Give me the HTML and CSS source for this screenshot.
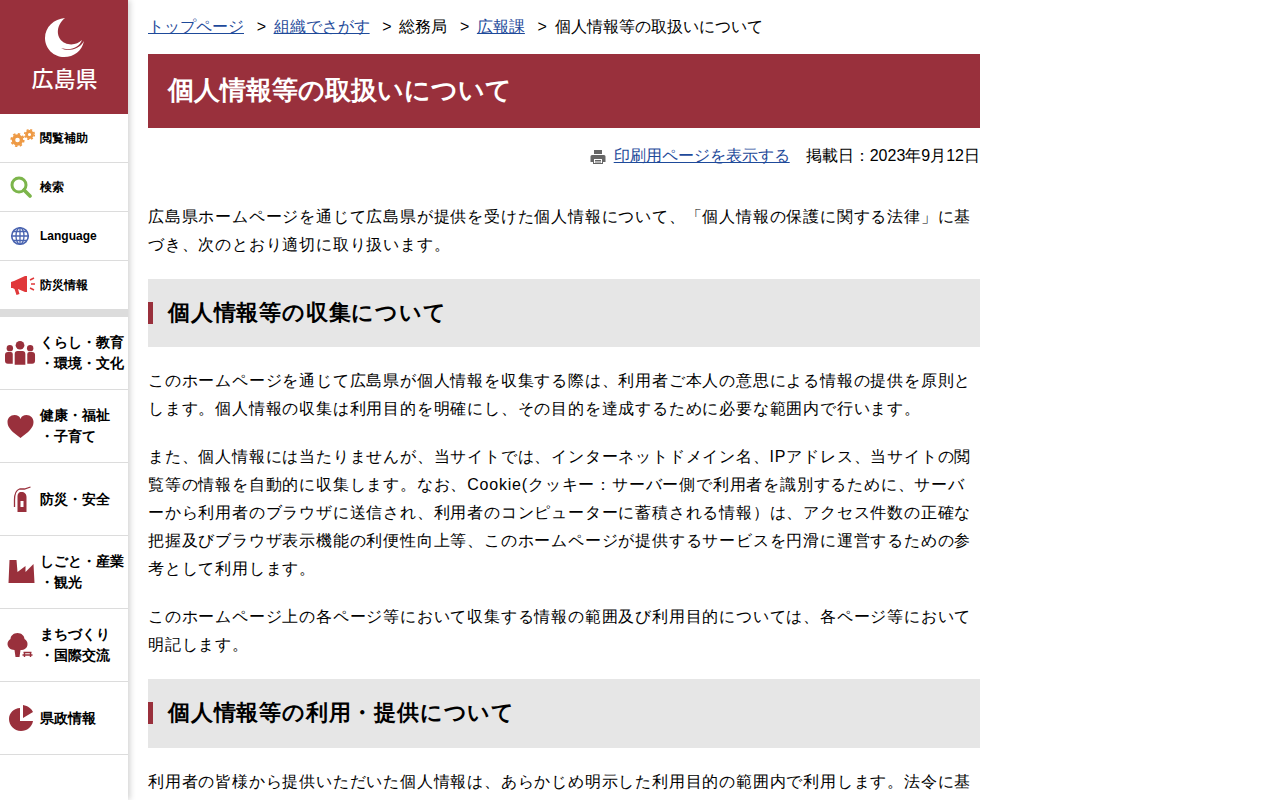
FILE: index.html
```html
<!DOCTYPE html>
<html lang="ja">
<head>
<meta charset="utf-8">
<title>個人情報等の取扱いについて</title>
<link rel="stylesheet" href="styles.css">
</head>
<body>
<div class="page">
<aside class="side">
  <a class="logo">
    <svg class="logo-mark" width="42" height="42" viewBox="0 0 42 42"><path fill="#fff" d="M21 1C10 2 1 10 1 21c0 11 9 19 19 19 10 0 18-6 20-16-3 6-10 9-16 9-3 0-5-1-7-2 9 3 18 0 21-8-4 4-11 6-17 3C12 22 11 9 21 1z"/></svg>
    <span class="logo-text">広島県</span>
  </a>
  <ul class="tools">
    <li class="tool"><svg class="ico" width="26" height="20" viewBox="0 0 26 20"><g fill="none" stroke="#ee9a45"><circle cx="7.500" cy="12" r="4" stroke-width="3.400"/><circle cx="7.500" cy="12" r="6.200" stroke-width="1.800" stroke-dasharray="2.400 2.400"/><circle cx="19.500" cy="6.500" r="3" stroke-width="2.800"/><circle cx="19.500" cy="6.500" r="4.800" stroke-width="1.600" stroke-dasharray="2 1.800"/></g></svg><span>閲覧補助</span></li>
    <li class="tool"><svg class="ico" width="26" height="22" viewBox="0 0 26 22"><circle cx="9" cy="9" r="7" fill="none" stroke="#7cb54b" stroke-width="3"/><path d="M14 14l6 6" stroke="#7cb54b" stroke-width="3.600" stroke-linecap="round"/></svg><span>検索</span></li>
    <li class="tool"><svg class="ico" width="26" height="20" viewBox="0 0 26 20"><g fill="none" stroke="#4a64b0" stroke-width="1.300"><circle cx="10" cy="10" r="8.300" stroke-width="1.600"/><ellipse cx="10" cy="10" rx="4" ry="8.300"/><path d="M10 1.700v16.600M1.700 10h16.600M3 5.500h14M3 14.500h14"/></g></svg><span class="latin">Language</span></li>
    <li class="tool"><svg class="ico" width="26" height="22" viewBox="0 0 26 22"><path fill="#e0383a" d="M1 8l3-1 11-5h2v16h-2L8 15l1.500 5-3 1-2-6-2-1H1z"/><path stroke="#e0383a" stroke-width="1.500" d="M20 6l4-2M21 10h4M20 14l4 2"/></svg><span>防災情報</span></li>
  </ul>
  <ul class="cats">
    <li class="cat cat-a"><svg class="cico" width="32" height="26" viewBox="0 0 32 26"><g fill="#99303c"><circle cx="15.500" cy="5" r="4.500"/><circle cx="5" cy="8" r="3.300"/><circle cx="26" cy="8" r="3.300"/><path d="M10 14q0-3 3-3h5q3 0 3 3v11H10zM0 15q0-3 3-3h3q2 0 2 2v10H3q-3 0-3-3zM23 14q0-2 2-2h3q3 0 3 3v6q0 3-3 3h-5z"/></g></svg><span>くらし・教育<br><i class="sub">・環境・文化</i></span></li>
    <li class="cat"><svg class="cico heart" width="28" height="24" viewBox="0 0 28 24"><path fill="#99303c" d="M14 24C6 18 1 14 1 8c0-4 3-7 7-7 3 0 5 1 6 4 1-3 3-4 6-4 4 0 7 3 7 7 0 6-5 10-13 16z"/></svg><span>健康・福祉<br><i class="sub">・子育て</i></span></li>
    <li class="cat"><svg class="cico" width="28" height="26" viewBox="0 0 28 26"><path fill="#99303c" d="M15 6c3 0 5 2 5 5v15h-9V11c0-3 1-5 4-5zM14 15v6h3v-6z"/><path fill="none" stroke="#99303c" stroke-width="1.300" d="M13 3h5l6-2M13 3C10 4 8 8 8 14v7"/></svg><span>防災・安全</span></li>
    <li class="cat"><svg class="cico" width="28" height="24" viewBox="0 0 28 24"><path fill="#99303c" d="M3 0h7l1 12 8-6v6l8-8 1 19H2z"/></svg><span>しごと・産業<br><i class="sub">・観光</i></span></li>
    <li class="cat"><svg class="cico" width="28" height="26" viewBox="0 0 28 26"><path fill="#99303c" d="M11 1c4 0 7 3 7 6 2 1 3 3 3 5 0 4-3 6-7 6l-1 7h-4l-1-7c-4 0-7-3-7-6 0-2 1-4 3-5 0-3 3-6 7-6z"/><path fill="none" stroke="#99303c" stroke-width="1.400" d="M17 20.500h8M16 23h10M18 21v4M24 21v4"/></svg><span>まちづくり<br><i class="sub">・国際交流</i></span></li>
    <li class="cat"><svg class="cico" width="28" height="26" viewBox="-1.500 0 28 26"><path fill="#99303c" d="M12 3v13h13c-1 6-6 10-12 10C6 26 1 20 1 14 1 8 6 3 12 3zM15 0c5 1 9 4 10 7l-10 6z"/></svg><span>県政情報</span></li>
  </ul>
</aside>
<main class="main">
  <nav class="crumbs"><a class="link">トップページ</a><span class="sep">&gt;</span><a class="link">組織でさがす</a><span class="sep">&gt;</span><span>総務局</span><span class="sep">&gt;</span><a class="link">広報課</a><span class="sep">&gt;</span><span>個人情報等の取扱いについて</span></nav>
  <h1 class="title">個人情報等の取扱いについて</h1>
  <div class="meta">
    <svg class="print" width="16" height="16" viewBox="0 0 16 16"><path fill="#666" fill-rule="evenodd" d="M4 1h8v4H4zM2 6h12q1.500 0 1.500 1.500V13H13v2H3v-2H.5V7.500Q.5 6 2 6zM4 10v4h8v-4z"/><path stroke="#666" d="M5 11.500h6M5 13h6"/></svg>
    <a class="link print-link">印刷用ページを表示する</a>
    <span class="date">掲載日：2023年9月12日</span>
  </div>
  <p class="para intro">広島県ホームページを通じて広島県が提供を受けた個人情報について、「個人情報の保護に関する法律」に基づき、次のとおり適切に取り扱います。</p>
  <h2 class="section"><span class="section-text">個人情報等の収集について</span></h2>
  <p class="para">このホームページを通じて広島県が個人情報を収集する際は、利用者ご本人の意思による情報の提供を原則とします。個人情報の収集は利用目的を明確にし、その目的を達成するために必要な範囲内で行います。</p>
  <p class="para">また、個人情報には当たりませんが、当サイトでは、インターネットドメイン名、IPアドレス、当サイトの閲覧等の情報を自動的に収集します。なお、Cookie(クッキー：サーバー側で利用者を識別するために、サーバーから利用者のブラウザに送信され、利用者のコンピューターに蓄積される情報）は、アクセス件数の正確な把握及びブラウザ表示機能の利便性向上等、このホームページが提供するサービスを円滑に運営するための参考として利用します。</p>
  <p class="para">このホームページ上の各ページ等において収集する情報の範囲及び利用目的については、各ページ等において明記します。</p>
  <h2 class="section section-b"><span class="section-text">個人情報等の利用・提供について</span></h2>
  <p class="para">利用者の皆様から提供いただいた個人情報は、あらかじめ明示した利用目的の範囲内で利用します。法令に基</p>
</main>
</div>
</body>
</html>
```

FILE: styles.css
```css
* { box-sizing: border-box; }
html, body { margin: 0; padding: 0; height: 800px; overflow: hidden; background: #fff; }
body { font-family: "Liberation Sans", sans-serif; color: #000; font-size: 16px; }
.page { display: flex; height: 800px; overflow: hidden; }
.side { width: 128px; flex: none; height: 800px; background: #fff; box-shadow: 2px 0 6px rgba(0,0,0,.18); }
.logo { height: 114px; background: #99303c; display: flex; flex-direction: column; align-items: center; padding-top: 17px; padding-left: 1px; color: #fff; }
.logo-mark { display: block; }
.logo-text { font-family: "Noto Sans CJK JP", sans-serif; font-size: 22px; line-height: 24px; margin-top: 6px; font-weight: 500; }
ul { list-style: none; margin: 0; padding: 0; }
.tools { border-bottom: 8px solid #dcdcdc; }
.tool { height: 49px; display: flex; align-items: center; padding-left: 10px; border-bottom: 1px solid #dcdcdc; font-size: 12px; font-weight: 700; gap: 4px; }
.tool:last-child { border-bottom: none; height: 48px; }
.ico { flex: none; }
.cat { height: 73px; display: flex; align-items: center; padding-left: 5px; border-bottom: 1px solid #dcdcdc; font-size: 14px; font-weight: 700; line-height: 21px; gap: 4px; }
.cico { flex: none; width: 31px; }
.sub { font-style: normal; }
.main { width: 832px; margin-left: 20px; }
.crumbs { height: 54px; display: flex; align-items: center; white-space: nowrap; }
.sep { margin: 0 7.6px 0 12.7px; }
.link { color: #1e4a9a; text-decoration: underline; }
.title { margin: 0; height: 74px; background: #99303c; color: #fff; font-size: 26.08px; font-weight: 700; line-height: 73px; padding-left: 20px; }
.meta { display: flex; justify-content: flex-end; align-items: center; height: 57px; }
.print { margin-right: 8px; }
.date { margin-left: 16px; }
.para { margin: 0 0 20px; line-height: 28px; letter-spacing: .8px; }
.intro { margin-top: 18px; }
.section { margin: 20px 0 20px; height: 68px; background: #e6e6e6; display: flex; align-items: center; font-size: 22.4px; font-weight: 700; letter-spacing: .8px; }
.section-b { height: 69px; padding-bottom: 1px; }
.section-text { border-left: 5px solid #99303c; padding-left: 15px; line-height: 22px; }
```
